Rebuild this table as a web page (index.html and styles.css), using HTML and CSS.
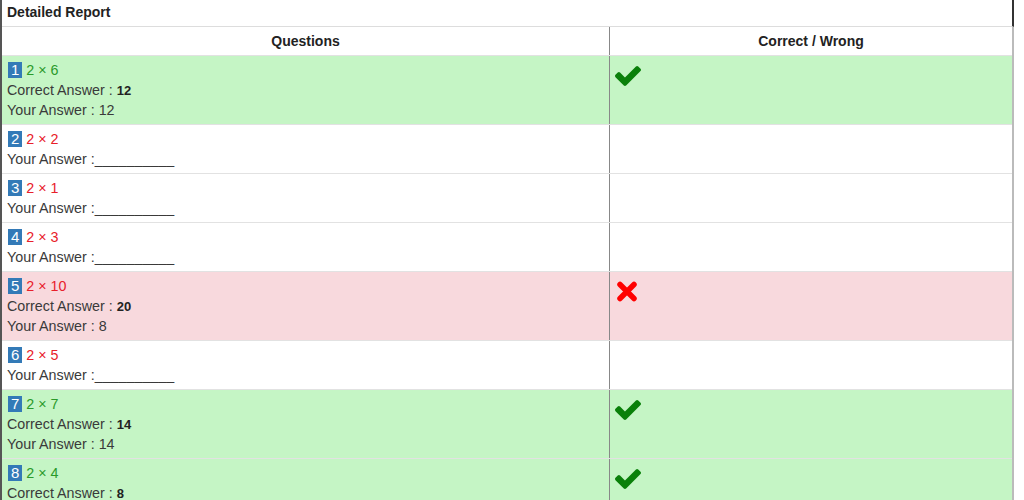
FILE: index.html
```html
<!DOCTYPE html>
<html>
<head>
<meta charset="utf-8">
<link rel="stylesheet" href="styles.css">
</head>
<body>
<div class="panel">
  <div class="panel-heading">Detailed Report</div>
  <table class="report">
    <thead>
      <tr><th class="col-q">Questions</th><th class="col-r">Correct / Wrong</th></tr>
    </thead>
    <tbody>
      <tr class="ok">
        <td><div><span class="num">1</span> <span class="q">2 × 6</span></div><div>Correct Answer : <b>12</b></div><div>Your Answer : 12</div></td>
        <td><svg class="check" viewBox="121 334 1550 1188"><path d="M1671 566q0 40-28 68l-724 724-136 136q-28 28-68 28t-68-28l-136-136-362-362q-28-28-28-68t28-68l136-136q28-28 68-28t68 28l294 295 656-657q28-28 68-28t68 28l136 136q28 28 28 68z"/></svg></td>
      </tr>
      <tr>
        <td><div><span class="num">2</span> <span class="q">2 × 2</span></div><div>Your Answer :__________</div></td>
        <td></td>
      </tr>
      <tr>
        <td><div><span class="num">3</span> <span class="q">2 × 1</span></div><div>Your Answer :__________</div></td>
        <td></td>
      </tr>
      <tr>
        <td><div><span class="num">4</span> <span class="q">2 × 3</span></div><div>Your Answer :__________</div></td>
        <td></td>
      </tr>
      <tr class="bad">
        <td><div><span class="num">5</span> <span class="q">2 × 10</span></div><div>Correct Answer : <b>20</b></div><div>Your Answer : 8</div></td>
        <td><svg class="cross" viewBox="0 0 22 21"><path d="M4 3.5 L18 17.5 M18 3.5 L4 17.5"/></svg></td>
      </tr>
      <tr>
        <td><div><span class="num">6</span> <span class="q">2 × 5</span></div><div>Your Answer :__________</div></td>
        <td></td>
      </tr>
      <tr class="ok">
        <td><div><span class="num">7</span> <span class="q">2 × 7</span></div><div>Correct Answer : <b>14</b></div><div>Your Answer : 14</div></td>
        <td><svg class="check" viewBox="121 334 1550 1188"><path d="M1671 566q0 40-28 68l-724 724-136 136q-28 28-68 28t-68-28l-136-136-362-362q-28-28-28-68t28-68l136-136q28-28 68-28t68 28l294 295 656-657q28-28 68-28t68 28l136 136q28 28 28 68z"/></svg></td>
      </tr>
      <tr class="ok">
        <td><div><span class="num">8</span> <span class="q">2 × 4</span></div><div>Correct Answer : <b>8</b></div><div>Your Answer : 8</div></td>
        <td><svg class="check" viewBox="121 334 1550 1188"><path d="M1671 566q0 40-28 68l-724 724-136 136q-28 28-68 28t-68-28l-136-136-362-362q-28-28-28-68t28-68l136-136q28-28 68-28t68 28l294 295 656-657q28-28 68-28t68 28l136 136q28 28 28 68z"/></svg></td>
      </tr>
    </tbody>
  </table>
</div>
</body>
</html>
```
FILE: styles.css
```css
html, body {
  margin: 0;
  padding: 0;
  background: #fff;
}
body {
  font-family: "Liberation Sans", Arial, sans-serif;
  font-size: 14.3px;
  line-height: 20px;
  color: #3a3a3a;
}
.panel {
  width: 1014px;
  box-sizing: border-box;
  border-left: 2px solid #555;
}
.panel-heading {
  font-weight: bold;
  font-size: 14px;
  padding: 2px 5px 4px;
  border-bottom: 1px solid #ddd;
  border-right: 2px solid #333;
  color: #222;
}
.report {
  width: 100%;
  border-collapse: collapse;
  border-right: 2px solid #bbb;
}
.report th {
  font-weight: bold;
  font-size: 14px;
  color: #222;
  text-align: center;
  padding: 4px 5px;
  border-bottom: 1px solid #e2e2e2;
}
.col-q {
  width: 597px;
  border-right: 1px solid #888;
}
.report td {
  vertical-align: top;
  padding: 4px 5px 4px 5px;
  border-bottom: 1px solid #e2e2e2;
}
.report td:first-child {
  border-right: 1px solid #888;
}
.report tr.ok td {
  background: #c5f5c5;
}
.report tr.bad td {
  background: #f8d9dd;
}
.num {
  display: inline-block;
  vertical-align: top;
  margin-top: 2px;
  background: #337ab7;
  color: #fff;
  font-size: 15px;
  line-height: 16px;
  padding: 0 3px;
  margin-left: 1px;
}
.q {
  color: #e8202a;
}
tr.ok .q {
  color: #2a9a2a;
}
b {
  font-size: 13px;
  line-height: 10px;
  color: #222;
}
.check {
  display: block;
  width: 26px;
  height: 20px;
  margin-top: 6px;
  fill: #0a800a;
}
.cross {
  display: block;
  width: 22px;
  height: 21px;
  margin-top: 5px;
  margin-left: 1px;
  fill: none;
  stroke: #f00;
  stroke-width: 5.5;
  stroke-linecap: round;
}
```
